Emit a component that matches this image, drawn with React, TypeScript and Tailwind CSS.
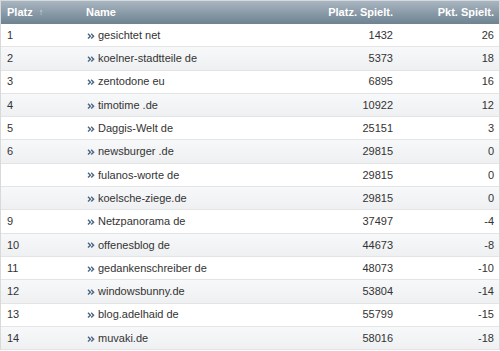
const rows: [string, string, number, number][] = [
  ["1", "gesichtet net", 1432, 26],
  ["2", "koelner-stadtteile de", 5373, 18],
  ["3", "zentodone eu", 6895, 16],
  ["4", "timotime .de", 10922, 12],
  ["5", "Daggis-Welt de", 25151, 3],
  ["6", "newsburger .de", 29815, 0],
  ["", "fulanos-worte de", 29815, 0],
  ["", "koelsche-ziege.de", 29815, 0],
  ["9", "Netzpanorama de", 37497, -4],
  ["10", "offenesblog de", 44673, -8],
  ["11", "gedankenschreiber de", 48073, -10],
  ["12", "windowsbunny.de", 53804, -14],
  ["13", "blog.adelhaid de", 55799, -15],
  ["14", "muvaki.de", 58016, -18],
];

const Chevrons = () => (
  <svg width="8" height="8" viewBox="0 0 8 8" className="shrink-0 mt-[1px]">
    <path d="M1 1.8 L3.4 4.2 L1 6.6" fill="none" stroke="#4a6783" strokeWidth="1.4" />
    <path d="M4.2 1.8 L6.6 4.2 L4.2 6.6" fill="none" stroke="#4a6783" strokeWidth="1.4" />
  </svg>
);

export default function App() {
  return (
    <div
      className="w-[500px] h-[351px] bg-white overflow-hidden text-[11px] text-[#333]"
      style={{ fontFamily: '"Liberation Sans", Arial, sans-serif' }}
    >
      <div className="border-l border-r border-[#d9d9d9]">
        {/* Kopfzeile */}
        <div className="grid grid-cols-[80px_220px_98px_1fr] h-[24px] items-center bg-gradient-to-b from-[#a9b6c0] to-[#6e8291] text-white font-bold border-t border-[#d3d9de]">
          <div className="pl-[6px] flex items-center gap-[6px]">
            Platz
            <span className="text-[9px] text-[#d6dde2]">↑</span>
          </div>
          <div className="pl-[5px]">Name</div>
          <div className="text-right pr-[6px]">Platz. Spielt.</div>
          <div className="text-right pr-[5px]">Pkt. Spielt.</div>
        </div>

        {/* Tabellenzeilen */}
        {rows.map(([pos, name, played, pts], i) => (
          <div
            key={name}
            className={
              "grid grid-cols-[80px_220px_98px_1fr] h-[23.3px] items-center border-b border-[#e4e4e4] " +
              (i % 2 === 1 ? "bg-gradient-to-b from-[#f7f8f9] to-[#eef0f2]" : "bg-white")
            }
          >
            <div className="pl-[6px]">{pos}</div>
            <div className="pl-[6px] flex items-center gap-[3px]">
              <Chevrons />
              <span>{name}</span>
            </div>
            <div className="text-right pr-[6px]">{played}</div>
            <div className="text-right pr-[5px]">{pts}</div>
          </div>
        ))}
      </div>
    </div>
  );
}
